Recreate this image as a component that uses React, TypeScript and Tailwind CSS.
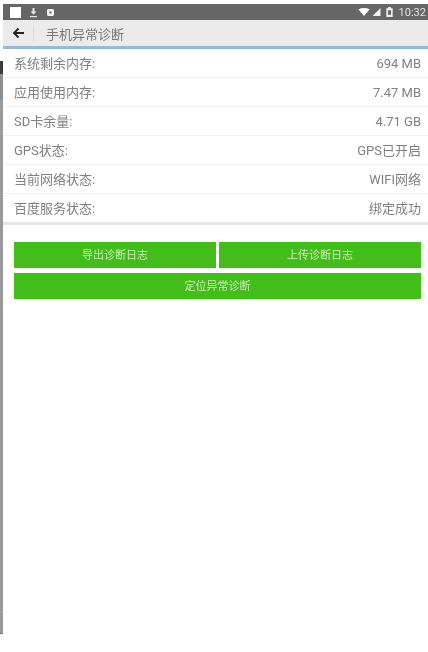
export default function App() {
  const rows = [
    ["系统剩余内存:", "694 MB"],
    ["应用使用内存:", "7.47 MB"],
    ["SD卡余量:", "4.71 GB"],
    ["GPS状态:", "GPS已开启"],
    ["当前网络状态:", "WIFI网络"],
    ["百度服务状态:", "绑定成功"],
  ];
  const font = { fontFamily: '"Roboto", "Noto Sans CJK SC", sans-serif' };
  return (
    <div className="flex h-[652px] w-[428px] items-start overflow-hidden bg-white blur-[0.7px]" style={font}>
      <div className="flex h-[634px] w-[3px] shrink-0 flex-col">
        <div className="h-[61px] bg-white" />
        <div className="h-[13px] bg-[#3a3a3a]" />
        <div className="h-[23px] bg-[#8f8f8f]" />
        <div className="h-[2px] bg-[#6f93ad]" />
        <div className="flex-1 bg-[#9a9a9a]" />
        <div className="h-[2px] bg-[#8fa5b5]" />
        <div className="h-[20px] bg-[#9a9a9a]" />
        <div className="h-px bg-[#5f7f99]" />
      </div>
      <div className="flex min-w-0 flex-1 flex-col pt-[4px]">
        <div className="flex h-[16px] items-center bg-[#666666] pl-[7px] pr-[2px] text-white">
          <div className="h-[11px] w-[11px] bg-white" />
          <svg className="ml-[8px]" width="9" height="11" viewBox="0 0 9 11" fill="#e8e8e8">
            <path d="M3.500 1h2v3.500H7.500L4.500 7.500 1.500 4.500H3.500Z" />
            <rect x="1" y="9" width="7" height="1.200" />
          </svg>
          <svg className="ml-[8px]" width="9" height="9" viewBox="0 0 9 9" fill="#f0f0f0">
            <path d="M2 1h5l1 1v5l-1 1H2L1 7V2Z M3.500 3.500v2h2v-2Z" fillRule="evenodd" />
          </svg>
          <div className="flex-1" />
          <svg width="12" height="8" viewBox="0 0 13 9" fill="#ffffff">
            <path d="M0 1.500Q6.500-1.500 13 1.500L6.500 9Z" />
          </svg>
          <svg className="ml-[2px]" width="9" height="8" viewBox="0 0 10 10" fill="#f4f4f4">
            <path d="M0 10 10 0V10Z" />
          </svg>
          <svg className="ml-[5px]" width="7" height="10" viewBox="0 0 7 11" fill="#f0f0f0">
            <path d="M2 0h3v1.500h2V11H0V1.500h2Z M1.800 3.500v5h3.400v-5Z" fillRule="evenodd" />
          </svg>
          <span className="ml-[6px] text-[11px] leading-none text-[#e4e4e4]">10:32</span>
        </div>
        <div className="flex h-[29px] items-center border-b-[3px] border-[#8dbde3] bg-[#ebebeb]">
          <svg className="ml-[9px]" width="13" height="12" viewBox="0 0 13 12" fill="none" stroke="#222222" strokeWidth="1.800">
            <path d="M12 6H2M6.500 1.500 2 6l4.500 4.500" />
          </svg>
          <div className="ml-[8px] h-[16px] w-px bg-[#dcdcdc]" />
          <span className="ml-[12px] pt-[3px] text-[13px] text-[#787878]">手机异常诊断</span>
        </div>
        <div className="border-b-[3px] border-[#e4e4ea]">
          {rows.map(([k, v], i) => (
            <div
              key={k}
              className={`flex items-center justify-between pl-[11px] pr-[7px] pt-[2px] text-[13px] text-[#808080] ${i < 5 ? "h-[29px] border-b border-[#f1f1f1]" : "h-[28px]"}`}
            >
              <span>{k}</span>
              <span>{v}</span>
            </div>
          ))}
        </div>
        <div className="flex flex-col gap-[5px] pl-[11px] pr-[7px] pt-[17px] text-[11px] text-[#cfe9c2]">
          <div className="flex gap-[3px]">
            <button className="flex h-[26px] flex-1 items-center justify-center bg-[#43bd1a] pt-[2px]">导出诊断日志</button>
            <button className="flex h-[26px] flex-1 items-center justify-center bg-[#43bd1a] pt-[2px]">上传诊断日志</button>
          </div>
          <button className="flex h-[26px] items-center justify-center bg-[#43bd1a] pt-[3px]">定位异常诊断</button>
        </div>
      </div>
    </div>
  );
}
